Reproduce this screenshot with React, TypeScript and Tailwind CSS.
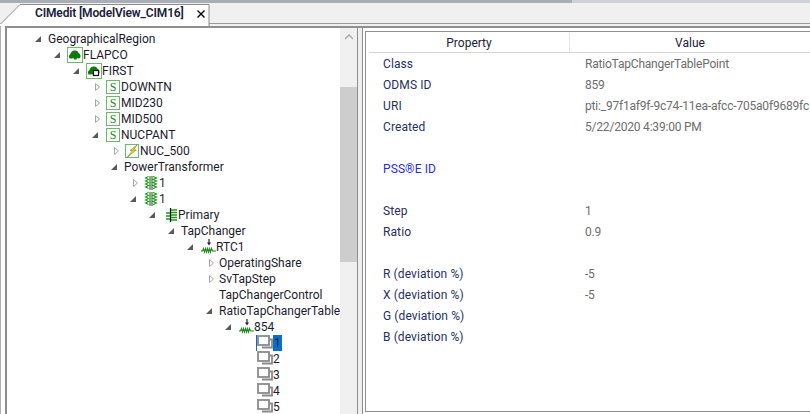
const FONT = "font-['Roboto',sans-serif]";

type IconKind = "region" | "subregion" | "substation" | "voltage" | "transformer" | "winding" | "tap" | "point";

type TreeRow = {
  level: number;
  label: string;
  arrow?: "open" | "closed";
  icon?: IconKind;
  selected?: boolean;
};

const TREE: TreeRow[] = [
  { level: 0, label: "GeographicalRegion", arrow: "open" },
  { level: 1, label: "FLAPCO", arrow: "open", icon: "region" },
  { level: 2, label: "FIRST", arrow: "open", icon: "subregion" },
  { level: 3, label: "DOWNTN", arrow: "closed", icon: "substation" },
  { level: 3, label: "MID230", arrow: "closed", icon: "substation" },
  { level: 3, label: "MID500", arrow: "closed", icon: "substation" },
  { level: 3, label: "NUCPANT", arrow: "open", icon: "substation" },
  { level: 4, label: "NUC_500", arrow: "closed", icon: "voltage" },
  { level: 4, label: "PowerTransformer", arrow: "open" },
  { level: 5, label: "1", arrow: "closed", icon: "transformer" },
  { level: 5, label: "1", arrow: "open", icon: "transformer" },
  { level: 6, label: "Primary", arrow: "open", icon: "winding" },
  { level: 7, label: "TapChanger", arrow: "open" },
  { level: 8, label: "RTC1", arrow: "open", icon: "tap" },
  { level: 9, label: "OperatingShare", arrow: "closed" },
  { level: 9, label: "SvTapStep", arrow: "closed" },
  { level: 9, label: "TapChangerControl" },
  { level: 9, label: "RatioTapChangerTable", arrow: "open" },
  { level: 10, label: "854", arrow: "open", icon: "tap" },
  { level: 11, label: "1", icon: "point", selected: true },
  { level: 11, label: "2", icon: "point" },
  { level: 11, label: "3", icon: "point" },
  { level: 11, label: "4", icon: "point" },
  { level: 11, label: "5", icon: "point" },
];

const PROPS: { name?: string; value?: string; blue?: boolean }[] = [
  { name: "Class", value: "RatioTapChangerTablePoint" },
  { name: "ODMS ID", value: "859" },
  { name: "URI", value: "pti:_97f1af9f-9c74-11ea-afcc-705a0f9689fc" },
  { name: "Created", value: "5/22/2020 4:39:00 PM" },
  {},
  { name: "PSS®E ID", blue: true },
  {},
  { name: "Step", value: "1" },
  { name: "Ratio", value: "0.9" },
  {},
  { name: "R (deviation %)", value: "-5" },
  { name: "X (deviation %)", value: "-5" },
  { name: "G (deviation %)" },
  { name: "B (deviation %)" },
];

function Arrow({ kind }: { kind?: "open" | "closed" }) {
  if (!kind) return <span className="w-4 shrink-0" />;
  return (
    <svg className="h-4 w-4 shrink-0" viewBox="0 0 16 16">
      {kind === "open" ? (
        <path d="M9 5v6H3z" fill="#595959" />
      ) : (
        <path d="M6.5 4.5l4 3.5-4 3.500z" fill="#fff" stroke="#a6a6a6" />
      )}
    </svg>
  );
}

function Blob() {
  return <path d="M2.500 11.500c-1-2-.5-4 1-4.500.5-2.500 2.500-4 5-3.500 1.500 0 2.500 1 3 2.500 2 .5 2.500 3 1.500 5-1 .5-2.500.5-3 0l-.5 1.500h-2.500l-.5-1.500c-1.500.5-3 .8-3.500.5z" fill="#0e7a0d" />;
}

function TreeIcon({ kind }: { kind: IconKind }) {
  if (kind === "region") {
    return (
      <svg className="h-4 w-4 shrink-0" viewBox="0 0 16 16">
        <rect x=".5" y=".5" width="15" height="15" fill="#fff" stroke="#6cbb6c" />
        <Blob />
      </svg>
    );
  }
  if (kind === "subregion") {
    return (
      <svg className="h-4 w-4 shrink-0" viewBox="0 0 16 16">
        <rect x=".5" y=".5" width="15" height="15" fill="#fff" stroke="#6cbb6c" />
        <Blob />
        <rect x="7.500" y="7.500" width="5" height="5" fill="#fff" stroke="#111" strokeWidth="1.200" />
      </svg>
    );
  }
  if (kind === "substation") {
    return (
      <svg className="h-4 w-4 shrink-0" viewBox="0 0 16 16">
        <rect x="1.500" y="1.500" width="13" height="13" fill="#fff" stroke="#6cbb6c" />
        <text x="8" y="12" textAnchor="middle" fontSize="12" fontFamily="'Liberation Serif',serif" fill="#1b8a1b">
          S
        </text>
      </svg>
    );
  }
  if (kind === "voltage") {
    return (
      <svg className="h-4 w-4 shrink-0" viewBox="0 0 16 16">
        <rect x="1.500" y="1.500" width="13" height="13" fill="#fff" stroke="#6cbb6c" />
        <path d="M13 2 6 7.500h2.500L3 14.500l9-7.500H9.500z" fill="#f3e21b" stroke="#5e5e1e" strokeWidth=".5" />
      </svg>
    );
  }
  if (kind === "transformer") {
    return (
      <svg className="h-4 w-4 shrink-0" viewBox="0 0 16 16">
        <path d="M5.500 1.500 2.500 3l3 1.500-3 1.500 3 1.500-3 1.500 3 1.500-3 1.500 3 1.500M10 1.500 13.500 3 10 4.500 13.500 6 10 7.500 13.500 9 10 10.500 13.500 12 10 13.500" fill="none" stroke="#1c9a1c" strokeWidth="1.100" />
        <path d="M7 1v14M9 1v14" stroke="#0c5c0c" strokeWidth="1" />
      </svg>
    );
  }
  if (kind === "winding") {
    return (
      <svg className="h-4 w-4 shrink-0" viewBox="0 0 16 16">
        <path d="M9 3h6M9 5.500h6M9 8h6M9 10.500h6M9 13h6M4 6h4M4 9h4M4 12h4" stroke="#1c9a1c" strokeWidth="1.300" />
        <path d="M8.500 1v14" stroke="#111" strokeWidth="1.200" />
      </svg>
    );
  }
  if (kind === "tap") {
    return (
      <svg className="h-4 w-4 shrink-0" viewBox="0 0 16 16">
        <path d="M1 12h1.500l1-2.500 1 3.500 1-3.500 1 3.500 1-3.500 1 3.500 1-3.500 1 3.500 1-3.500 1 2.500H16" fill="none" stroke="#1c8a1c" strokeWidth="1.100" />
        <path d="M9 0v4" stroke="#222" strokeWidth="1.200" />
        <path d="M7 3.500h4L9 6.500z" fill="#222" />
      </svg>
    );
  }
  return (
    <svg className="h-4 w-4 shrink-0" viewBox="0 0 16 16">
      <rect x="1" y="1" width="11" height="9" fill="#fff" stroke="#8a8a8a" strokeWidth="1.800" />
      <path d="M5 12.500h10v-8h-3" fill="none" stroke="#8a8a8a" strokeWidth="1.800" />
    </svg>
  );
}

function Row({ row }: { row: TreeRow }) {
  return (
    <div className="flex h-4 items-center" style={{ paddingLeft: row.level * 19 }}>
      <Arrow kind={row.arrow} />
      {row.icon &&
        (row.selected ? (
          <span className="-ml-px border-l border-[#0a6ecb]">
            <TreeIcon kind={row.icon} />
          </span>
        ) : (
          <TreeIcon kind={row.icon} />
        ))}
      <span className={`whitespace-nowrap leading-4 text-[#1c1c2c] ${row.selected ? "bg-[#0a6ecb] px-px" : ""}`}>
        {row.label}
      </span>
    </div>
  );
}

export default function App() {
  return (
    <div className={`${FONT} flex h-[414px] w-[810px] flex-col overflow-hidden bg-[#f0f0f0] text-xs`}>
      {/* document tab strip */}
      <div className="flex h-[3px] shrink-0">
        <div className="w-[572px] bg-[#a9adb5]" />
        <div className="flex-1 bg-[#cfd2d8]" />
      </div>
      <div className="relative h-[23px] shrink-0">
        <div className="h-[21px] border-b border-[#9a9a9a]" />
        <svg className="absolute top-0 left-0 h-[23px] w-[212px]" viewBox="0 0 212 23">
          <path d="M0 23V21L20 1H209V23z" fill="#fff" />
          <path d="M0.500 21L20 1.500H209V23" fill="none" stroke="#8a8a8a" />
        </svg>
        <div className="absolute top-0 left-[35px] flex h-5 items-center gap-[13px]">
          <span className="font-semibold tracking-[-0.15px] whitespace-nowrap text-[#20203a]">CIMedit [ModelView_CIM16]</span>
          <svg className="mt-0.5 h-2 w-2" viewBox="0 0 8 8">
            <path d="M.5.500l7 7M7.500.500l-7 7" stroke="#000" strokeWidth="1.400" />
          </svg>
        </div>
      </div>
      {/* panes */}
      <div className="flex min-h-0 flex-1 bg-white">
        <div className="w-[5px] shrink-0 border-l border-[#b0b0b0]" />
        <div className="flex min-w-0 flex-1 border-t-2 border-[#8f8f8f]">
          <div className="flex w-[352px] shrink-0 border-l-2 border-[#8f8f8f]">
            <div className="min-w-0 flex-1 overflow-hidden pt-[3px] pl-[25px]">
              {TREE.map((row, i) => (
                <Row key={i} row={row} />
              ))}
            </div>
            <div className="flex w-[17px] shrink-0 flex-col bg-[#f0f0f0]">
              <div className="flex h-[17px] items-center justify-center">
                <svg className="h-2 w-2" viewBox="0 0 8 8">
                  <path d="M0 6l4-4 4 4" fill="none" stroke="#a6a6a6" strokeWidth="1.300" />
                </svg>
              </div>
              <div className="mt-[42px] h-[175px] bg-[#cdcdcd]" />
            </div>
          </div>
          <div className="w-[6px] shrink-0 border-x border-[#8f8f8f] bg-[#f0f0f0]" />
          <div className="mt-[3px] mb-[2px] ml-[2px] min-w-0 flex-1 border-y border-l border-[#8f8f8f] bg-white">
            <div className="mt-px ml-[3px] flex h-5 border-b border-[#d5d5d5] text-[#20203a]">
              <div className="flex w-[201px] shrink-0 items-center justify-center border-r border-[#e4e4e4]">Property</div>
              <div className="flex w-[247px] items-center justify-center">Value</div>
            </div>
            <div>
              {PROPS.map((p, i) => (
                <div key={i} className="flex h-[21px] items-center whitespace-nowrap">
                  <span className={`w-[219px] shrink-0 pl-[17px] tracking-[0.1px] ${p.blue ? "text-[#2a2ae6]" : "text-[#1f2f66]"}`}>
                    {p.name}
                  </span>
                  <span className="tracking-[-0.2px] text-[#6d6d6d]">{p.value}</span>
                </div>
              ))}
            </div>
          </div>
        </div>
      </div>
    </div>
  );
}
